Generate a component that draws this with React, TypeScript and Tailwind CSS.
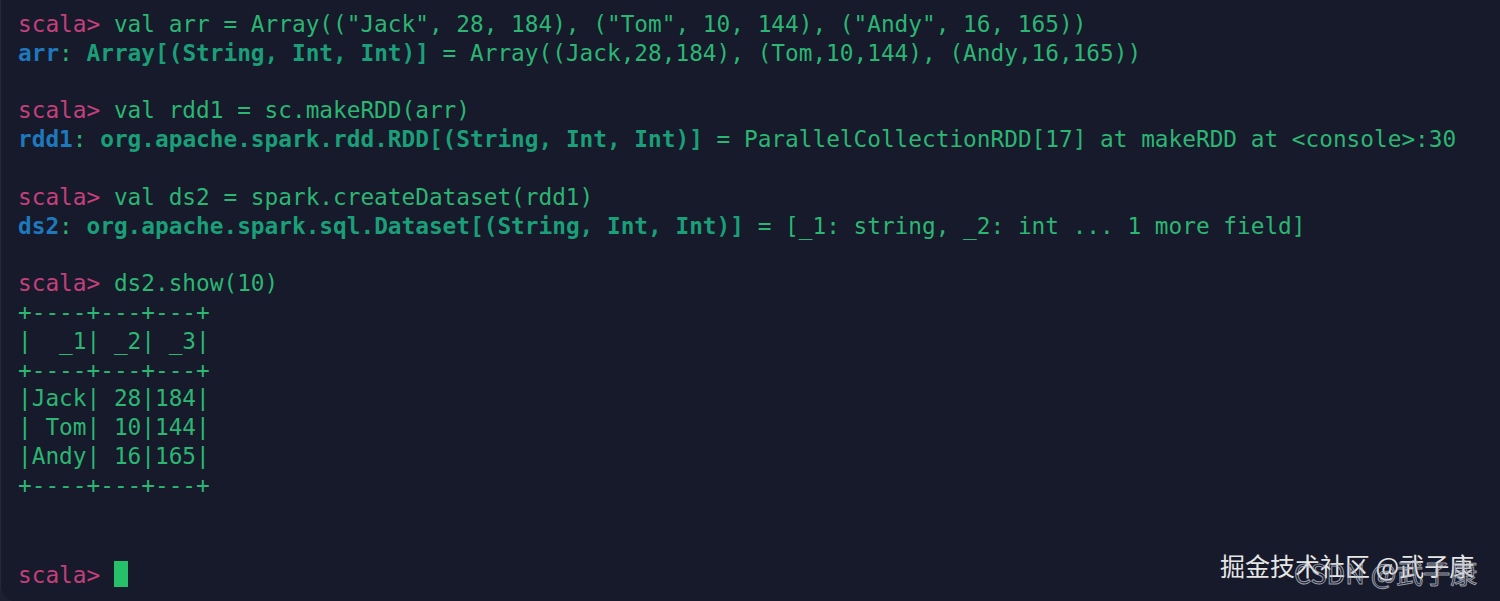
import React from "react";

const mono = "font-['DejaVu_Sans_Mono','Liberation_Mono',monospace]";

const P = ({ children }: { children: React.ReactNode }) => (
  <span className="text-[#c4407c]">{children}</span>
);
const G = ({ children }: { children: React.ReactNode }) => (
  <span className="text-[#2bb673]">{children}</span>
);
const B = ({ children }: { children: React.ReactNode }) => (
  <span className="font-bold text-[#1e78bd]">{children}</span>
);
const T = ({ children }: { children: React.ReactNode }) => (
  <span className="font-bold text-[#1a9f78]">{children}</span>
);

const Line = ({ children }: { children?: React.ReactNode }) => (
  <div className="h-[28.8px] whitespace-pre">{children ?? " "}</div>
);

const table = [
  "+----+---+---+",
  "|  _1| _2| _3|",
  "+----+---+---+",
  "|Jack| 28|184|",
  "| Tom| 10|144|",
  "|Andy| 16|165|",
  "+----+---+---+",
];

export default function App() {
  return (
    <div className="relative h-[601px] w-[1500px] overflow-hidden bg-[#1c2030]">
      <div
        className={`h-full w-full rounded-bl-[14px] border-l border-[#23283a] bg-[#161a2a] pl-[17px] pt-[10px] text-[22.75px] leading-[28.8px] ${mono}`}
      >
        <Line>
          <P>scala&gt;</P>
          <G>{' val arr = Array(("Jack", 28, 184), ("Tom", 10, 144), ("Andy", 16, 165))'}</G>
        </Line>
        <Line>
          <B>arr</B>
          <G>: </G>
          <T>Array[(String, Int, Int)]</T>
          <G> = Array((Jack,28,184), (Tom,10,144), (Andy,16,165))</G>
        </Line>
        <Line />
        <Line>
          <P>scala&gt;</P>
          <G> val rdd1 = sc.makeRDD(arr)</G>
        </Line>
        <Line>
          <B>rdd1</B>
          <G>: </G>
          <T>org.apache.spark.rdd.RDD[(String, Int, Int)]</T>
          <G> = ParallelCollectionRDD[17] at makeRDD at &lt;console&gt;:30</G>
        </Line>
        <Line />
        <Line>
          <P>scala&gt;</P>
          <G> val ds2 = spark.createDataset(rdd1)</G>
        </Line>
        <Line>
          <B>ds2</B>
          <G>: </G>
          <T>org.apache.spark.sql.Dataset[(String, Int, Int)]</T>
          <G> = [_1: string, _2: int ... 1 more field]</G>
        </Line>
        <Line />
        <Line>
          <P>scala&gt;</P>
          <G> ds2.show(10)</G>
        </Line>
        {table.map((row, i) => (
          <Line key={i}>
            <G>{row}</G>
          </Line>
        ))}
        <Line />
        <Line />
        <Line>
          <P>scala&gt;</P>
          <span> </span>
          <span className="inline-block h-[26px] w-[14px] translate-y-[4px] bg-[#27c06a]" />
        </Line>
      </div>

      {/* watermarks */}
      <span className="absolute left-[1220px] top-[553px] text-[25px] leading-none text-[#e6e6e6] font-['Noto_Sans_CJK_SC',sans-serif]">
        掘金技术社区 @武子康
      </span>
      <span className="absolute left-[1294px] top-[559px] text-[27px] leading-none text-transparent [-webkit-text-stroke:1px_#b8bcc6] font-['Noto_Sans_CJK_SC',sans-serif] opacity-80">
        CSDN @武子康
      </span>
    </div>
  );
}
